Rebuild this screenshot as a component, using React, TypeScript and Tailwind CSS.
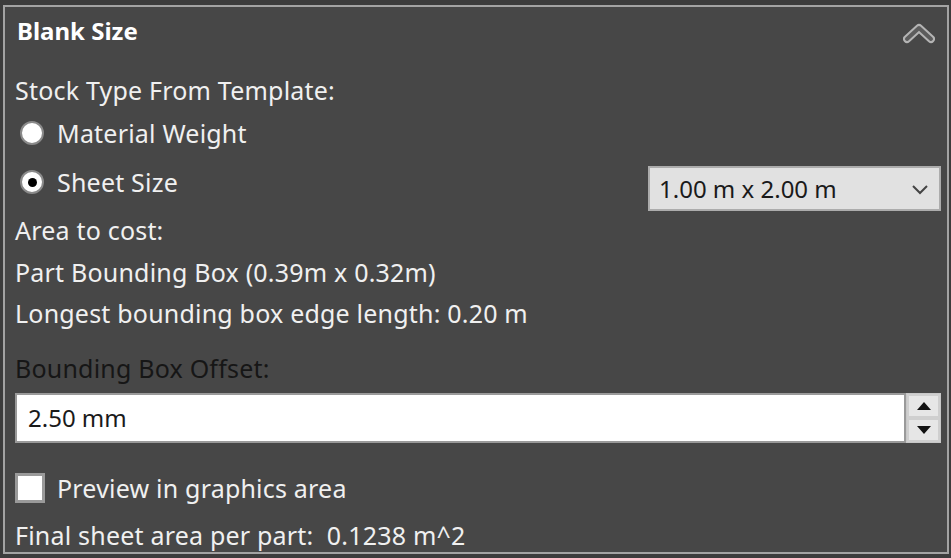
import React from "react";

const font = { fontFamily: '"Noto Sans", "Open Sans", sans-serif' };

function Radio({ checked }: { checked?: boolean }) {
  return (
    <span className="flex h-[24px] w-[24px] items-center justify-center rounded-full border-2 border-[#8a8a8a] bg-white">
      {checked && <span className="h-[9px] w-[9px] rounded-full bg-black" />}
    </span>
  );
}

export default function App() {
  return (
    <div className="h-[558px] w-[951px] bg-[#3c3c3c] pl-[3px] pt-[5px]" style={font}>
      <div className="flex h-[549px] w-[946px] flex-col border-2 border-[#a3a3a3] bg-[#474747] text-[25px] leading-[34px] tracking-[0.2px] text-[#f0f0f0]">
        {/* header */}
        <div className="flex h-[62px] items-start justify-between pl-[12px] pr-[12px] pt-[7px]">
          <span className="text-[24px] font-bold tracking-normal text-white">Blank Size</span>
          <svg width="32" height="24" viewBox="0 0 32 24" className="mt-[7px]">
            <path d="M4 18 L16 7 L28 18" fill="none" stroke="#b4b4b4" strokeWidth="8" strokeLinecap="round" strokeLinejoin="round" />
            <path d="M4 18 L16 7 L28 18" fill="none" stroke="#5c5c5c" strokeWidth="4" strokeLinecap="round" strokeLinejoin="round" />
          </svg>
        </div>

        <div className="flex h-[42px] items-center pl-[10px]">Stock Type From Template:</div>

        <div className="flex h-[44px] items-center gap-[13px] pl-[15px]">
          <Radio />
          <span>Material Weight</span>
        </div>

        <div className="flex h-[54px] items-start justify-between pl-[15px] pr-[6px]">
          <div className="flex h-[54px] items-center gap-[13px]">
            <Radio checked />
            <span>Sheet Size</span>
          </div>
          <div className="mt-[11px] flex h-[45px] w-[293px] items-center justify-between border-2 border-[#acacac] bg-[#e1e1e1] pl-[9px] pr-[10px] text-[24px] tracking-normal text-[#1a1a1a]">
            <span>1.00 m x 2.00 m</span>
            <svg width="18" height="12" viewBox="0 0 18 12">
              <path d="M2 3 L9 10 L16 3" fill="none" stroke="#444" strokeWidth="2" />
            </svg>
          </div>
        </div>

        <div className="flex h-[42px] items-center pl-[10px]">Area to cost:</div>
        <div className="flex h-[41px] items-center pl-[10px]">Part Bounding Box (0.39m x 0.32m)</div>
        <div className="flex h-[42px] items-center pl-[10px]">Longest bounding box edge length: 0.20 m</div>

        <div className="flex h-[59px] items-end pb-[8px] pl-[10px] text-[#161616]">Bounding Box Offset:</div>

        <div className="flex h-[50px] items-stretch pl-[10px] pr-[6px]">
          <div className="flex flex-1 items-center border-2 border-[#9a9a9a] bg-white pl-[11px] text-[24px] tracking-normal text-[#1a1a1a]">2.50 mm</div>
          <div className="flex w-[35px] flex-col border border-[#c8c8c8] bg-[#e4e4e4]">
            <div className="flex flex-1 items-center justify-center border-2 border-[#cfcfcf] bg-[#e6e6e6]">
              <svg width="14" height="8" viewBox="0 0 14 8"><path d="M0 8 L7 0 L14 8 Z" fill="#111" /></svg>
            </div>
            <div className="flex flex-1 items-center justify-center border-2 border-[#cfcfcf] bg-[#e6e6e6]">
              <svg width="14" height="8" viewBox="0 0 14 8"><path d="M0 0 L7 8 L14 0 Z" fill="#111" /></svg>
            </div>
          </div>
        </div>

        <div className="flex h-[69px] items-center gap-[12px] pl-[10px] pt-[21px]">
          <span className="h-[30px] w-[30px] border-[3px] border-[#9a9a9a] bg-white" />
          <span>Preview in graphics area</span>
        </div>

        <div className="flex h-[40px] items-center pl-[10px] pt-[6px]">Final sheet area per part:&nbsp; 0.1238 m^2</div>
      </div>
    </div>
  );
}
